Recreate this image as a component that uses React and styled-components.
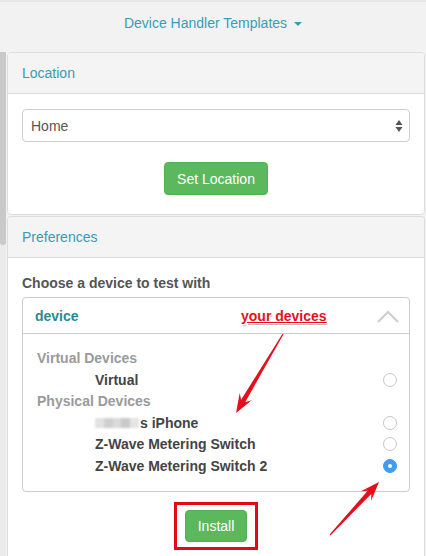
import React from 'react';
import styled, { createGlobalStyle } from 'styled-components';

const GlobalStyle = createGlobalStyle`
  html, body {
    margin: 0;
    padding: 0;
    background: #f2f2f2;
    font-family: "Liberation Sans", Arial, sans-serif;
    font-size: 14px;
    color: #333;
  }
`;

const Page = styled.div`
  position: relative;
  width: 426px;
  height: 556px;
  overflow: hidden;
  border-top: 2px solid #e6e6e6;
  box-sizing: border-box;
`;

const TopBar = styled.div`
  height: 50px;
  display: flex;
  justify-content: center;
  padding-top: 11px;
  box-sizing: border-box;
  color: #3b9db3;
  font-size: 14px;
  line-height: 20px;
`;

const Caret = styled.span`
  display: inline-block;
  margin-left: 7px;
  margin-top: 9px;
  border-top: 4px solid #3b9db3;
  border-left: 4px solid transparent;
  border-right: 4px solid transparent;
  height: 0;
`;

const Layout = styled.div`
  display: flex;
  align-items: stretch;
  height: 504px;
`;

const Track = styled.div`
  width: 6px;
  background: #ebebeb;
  flex: none;
`;

const Thumb = styled.div`
  height: 193px;
  background: #c9c9c9;
  border-radius: 0 0 3px 3px;
`;

const Main = styled.div`
  flex: 1;
  margin-left: 1px;
  margin-right: 1px;
  display: flex;
  flex-direction: column;
`;

const Panel = styled.div`
  border: 1px solid #dcdcdc;
  border-radius: 4px;
  background: #fff;
  overflow: hidden;
  flex: ${(p) => (p.$grow ? '1' : 'none')};
  margin-bottom: ${(p) => (p.$grow ? '0' : '1px')};
  ${(p) => p.$grow && 'border-bottom: none; border-radius: 4px 4px 0 0;'}
`;

const PanelHeading = styled.div`
  background: #f4f4f4;
  border-bottom: 1px solid #dcdcdc;
  height: 40px;
  padding: 0 14px;
  display: flex;
  align-items: center;
  color: #3a9ab2;
  font-size: 14px;
`;

const PanelBody = styled.div`
  padding: 15px 14px 19px;
  display: flex;
  flex-direction: column;
`;

const SelectBox = styled.div`
  height: 33px;
  border: 1px solid #cfcfcf;
  border-radius: 4px;
  box-sizing: border-box;
  display: flex;
  align-items: center;
  justify-content: space-between;
  padding: 0 6px 0 8px;
  color: #555;
  font-size: 14px;
`;

const Center = styled.div`
  display: flex;
  justify-content: center;
  margin-top: ${(p) => p.$top || 0}px;
`;

const Button = styled.button`
  background: #5cb85c;
  border: 1px solid #55b055;
  border-radius: 4px;
  color: #fff;
  font-family: "Liberation Sans", Arial, sans-serif;
  font-size: 14px;
  height: ${(p) => p.$h || 33}px;
  padding: 0 12px;
  cursor: pointer;
`;

const Highlight = styled.div`
  border: 3px solid #e30a17;
  padding: 5px 8px;
  display: flex;
`;

const Label = styled.div`
  font-weight: bold;
  color: #555;
  font-size: 14px;
  line-height: 20px;
  margin-bottom: 4px;
`;

const DeviceBox = styled.div`
  position: relative;
  border: 1px solid #cccccc;
  border-radius: 4px;
`;

const DeviceHeader = styled.div`
  height: 35px;
  border-bottom: 1px solid #cccccc;
  display: flex;
  align-items: center;
  justify-content: space-between;
  padding: 0 10px 0 12px;
  color: #2a8a91;
  font-weight: bold;
  font-size: 14px;
`;

const Note = styled.span`
  position: absolute;
  left: 218px;
  top: 10px;
  color: #e6101c;
  font-weight: bold;
  font-size: 14px;
  text-decoration: underline;
  text-shadow: 1px 1px 0 #fff, -1px -1px 0 #fff, 1px -1px 0 #fff, -1px 1px 0 #fff, 1px 2px 1px #bbb;
`;

const List = styled.div`
  padding: 14px 12px 15px 14px;
`;

const GroupTitle = styled.div`
  height: 21.4px;
  line-height: 21.4px;
  color: #9a9a9a;
  font-weight: bold;
`;

const Row = styled.div`
  height: 21.4px;
  display: flex;
  align-items: center;
  justify-content: space-between;
  padding-left: 58px;
  color: #444;
  font-weight: bold;
`;

const Radio = styled.span`
  width: 14px;
  height: 14px;
  border-radius: 50%;
  box-sizing: border-box;
  display: flex;
  align-items: center;
  justify-content: center;
  background: ${(p) => (p.$on ? '#3d9cf8' : '#fff')};
  border: 1px solid ${(p) => (p.$on ? '#3d9cf8' : '#c6c6c6')};

  &::after {
    content: '';
    width: 4px;
    height: 4px;
    border-radius: 50%;
    background: #fff;
    display: ${(p) => (p.$on ? 'block' : 'none')};
  }
`;

const Blurred = styled.span`
  display: inline-block;
  width: 44px;
  height: 10px;
  margin-right: 1px;
  background: linear-gradient(90deg, #e2e2e2 0 20%, #cfcfcf 20% 40%, #dadada 40% 60%, #c9c9c9 60% 80%, #e4e4e4 80%);
  filter: blur(1px);
`;

const Overlay = styled.svg`
  position: absolute;
  left: 0;
  top: 0;
  pointer-events: none;
`;

const arrowPath = (tx, ty, hx, hy) => {
  const dx = hx - tx;
  const dy = hy - ty;
  const len = Math.hypot(dx, dy);
  const ux = dx / len;
  const uy = dy / len;
  const nx = -uy;
  const ny = ux;
  const bx = hx - ux * 17;
  const by = hy - uy * 17;
  const p = (x, y) => `${x.toFixed(1)},${y.toFixed(1)}`;
  return [
    p(tx + nx * 0.6, ty + ny * 0.6),
    p(bx + ux * 3 + nx * 2.4, by + uy * 3 + ny * 2.4),
    p(bx - ux * 2 + nx * 7, by - uy * 2 + ny * 7),
    p(hx, hy),
    p(bx - ux * 2 - nx * 7, by - uy * 2 - ny * 7),
    p(bx + ux * 3 - nx * 2.4, by + uy * 3 - ny * 2.4),
    p(tx - nx * 0.6, ty - ny * 0.6),
  ].join(' ');
};

const Chevron = () => (
  <svg width="22" height="14" viewBox="0 0 22 14">
    <path d="M1 13 L11 3 L21 13" fill="none" stroke="#cdcdcd" strokeWidth="2" />
  </svg>
);

const SelectArrows = () => (
  <svg width="8" height="14" viewBox="0 0 8 14">
    <path d="M4 1 L7.5 6 L0.5 6 Z M0.5 8 L7.5 8 L4 13 Z" fill="#555" />
  </svg>
);

const App = () => (
  <Page>
    <GlobalStyle />
    <TopBar>
      Device Handler Templates
      <Caret />
    </TopBar>
    <Layout>
      <Track>
        <Thumb />
      </Track>
      <Main>
        <Panel>
          <PanelHeading>Location</PanelHeading>
          <PanelBody>
            <SelectBox>
              Home
              <SelectArrows />
            </SelectBox>
            <Center $top={20}>
              <Button>Set Location</Button>
            </Center>
          </PanelBody>
        </Panel>
        <Panel $grow>
          <PanelHeading>Preferences</PanelHeading>
          <PanelBody>
            <Label>Choose a device to test with</Label>
            <DeviceBox>
              <DeviceHeader>
                device
                <Chevron />
              </DeviceHeader>
              <Note>your devices</Note>
              <List>
                <GroupTitle>Virtual Devices</GroupTitle>
                <Row>Virtual<Radio /></Row>
                <GroupTitle>Physical Devices</GroupTitle>
                <Row><span><Blurred />s iPhone</span><Radio /></Row>
                <Row>Z-Wave Metering Switch<Radio /></Row>
                <Row>Z-Wave Metering Switch 2<Radio $on /></Row>
              </List>
            </DeviceBox>
            <Center $top={10}>
              <Highlight>
                <Button $h={32}>Install</Button>
              </Highlight>
            </Center>
          </PanelBody>
        </Panel>
      </Main>
    </Layout>
    <Overlay width="426" height="556">
      <polygon points={arrowPath(283, 332, 236, 411)} fill="#e3101b" />
      <polygon points={arrowPath(330, 533, 379, 480)} fill="#e3101b" />
    </Overlay>
  </Page>
);

export default App;
